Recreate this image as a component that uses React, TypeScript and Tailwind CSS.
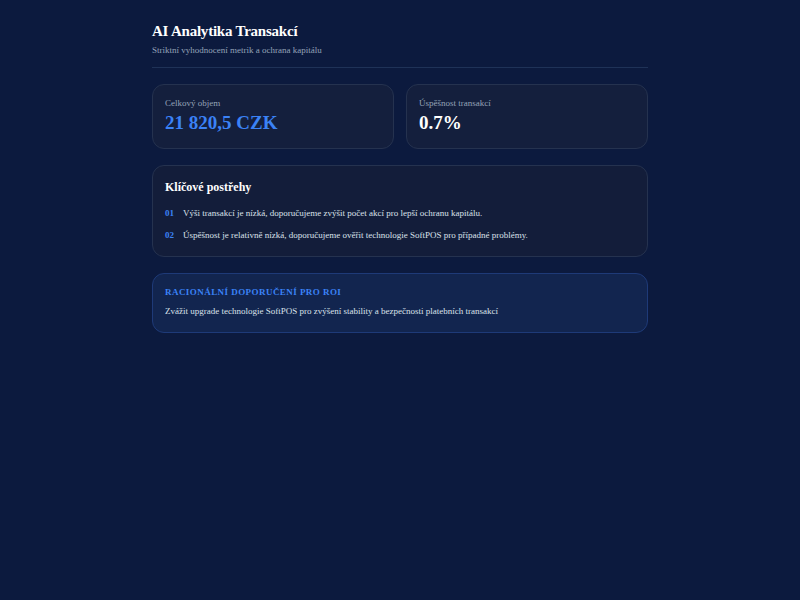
const INSIGHTS = [
  "Výši transakcí je nízká, doporučujeme zvýšit počet akcí pro lepší ochranu kapitálu.",
  "Úspěšnost je relativně nízká, doporučujeme ověřit technologie SoftPOS pro případné problémy.",
];

function StatCard({ label, value, accent }: { label: string; value: string; accent?: boolean }) {
  return (
    <div className="rounded-xl border border-[#25324f] bg-[#141f3d] px-[12px] pt-[12px] pb-[13px]">
      <div className="text-[9px] leading-[12px] text-[#94a3b8]">{label}</div>
      <div
        className={`mt-[2px] text-[19px] font-bold leading-[24px] ${accent ? "text-[#3b82f6]" : "text-white"}`}
      >
        {value}
      </div>
    </div>
  );
}

export default function App() {
  return (
    <div className="min-h-screen bg-[#0c1a3e] font-['Liberation_Serif',serif]">
      <div className="mx-auto max-w-[496px] pt-[21px]">
        <header className="border-b border-[#1f3257] pb-[11px]">
          <h1 className="text-[15px] font-bold leading-[20px] tracking-[-0.015em] text-white">
            AI Analytika Transakcí
          </h1>
          <p className="mt-[3px] text-[9px] leading-[12px] text-[#94a3b8]">
            Striktní vyhodnocení metrik a ochrana kapitálu
          </p>
        </header>

        <div className="mt-[16px] grid grid-cols-2 gap-[12px]">
          <StatCard label="Celkový objem" value="21 820,5 CZK" accent />
          <StatCard label="Úspěšnost transakcí" value="0.7%" />
        </div>

        <section className="mt-[16px] rounded-xl border border-[#25324f] bg-[#131d3a] px-[12px] pt-[13px] pb-[14px]">
          <h2 className="text-[12px] font-bold leading-[16px] text-white">Klíčové postřehy</h2>
          <ul className="mt-[11px] flex flex-col gap-[8px]">
            {INSIGHTS.map((text, i) => (
              <li key={i} className="flex items-baseline gap-[8px] text-[9px] leading-[14px]">
                <span className="w-[10px] shrink-0 text-[9px] font-bold text-[#3b82f6]">
                  {String(i + 1).padStart(2, "0")}
                </span>
                <span className="text-[#dbe1ea]">{text}</span>
              </li>
            ))}
          </ul>
        </section>

        <section className="mt-[16px] rounded-xl border border-[#1e3a78] bg-[#12254f] px-[12px] pt-[12px] pb-[14px]">
          <h3 className="text-[9px] font-bold uppercase leading-[12px] tracking-wider text-[#3b82f6]">
            Racionální doporučení pro ROI
          </h3>
          <p className="mt-[6px] text-[9px] leading-[14px] text-[#dbe1ea]">
            Zvážit upgrade technologie SoftPOS pro zvýšení stability a bezpečnosti platebních transakcí
          </p>
        </section>
      </div>
    </div>
  );
}
